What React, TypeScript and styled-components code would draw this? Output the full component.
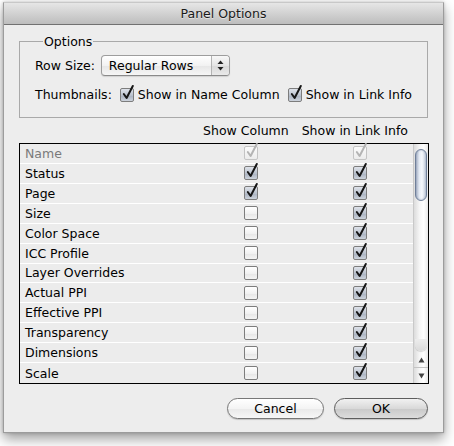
import React from 'react'
import styled, { createGlobalStyle } from 'styled-components'

const GlobalStyle = createGlobalStyle`
	html, body {
		margin: 0;
		padding: 0;
		background: #ffffff;
	}
	body {
		font-family: 'DejaVu Sans', 'Liberation Sans', sans-serif;
		font-size: 12.5px;
		color: #000;
	}
`

type Field = {
	label: string
	column: boolean
	linkInfo: boolean
	disabled?: boolean
}

const fields: Field[] = [
	{ label: 'Name', column: true, linkInfo: true, disabled: true },
	{ label: 'Status', column: true, linkInfo: true },
	{ label: 'Page', column: true, linkInfo: true },
	{ label: 'Size', column: false, linkInfo: true },
	{ label: 'Color Space', column: false, linkInfo: true },
	{ label: 'ICC Profile', column: false, linkInfo: true },
	{ label: 'Layer Overrides', column: false, linkInfo: true },
	{ label: 'Actual PPI', column: false, linkInfo: true },
	{ label: 'Effective PPI', column: false, linkInfo: true },
	{ label: 'Transparency', column: false, linkInfo: true },
	{ label: 'Dimensions', column: false, linkInfo: true },
	{ label: 'Scale', column: false, linkInfo: true },
]

const Page = styled.div`
	padding: 2px 0 0 3px;
	width: 454px;
	height: 446px;
	box-sizing: border-box;
`

const Window = styled.div`
	width: 441px;
	height: 431px;
	box-sizing: border-box;
	border: 1px solid #9c9c9c;
	border-top-color: #c8c8c8;
	background: #ededed;
	box-shadow: 0 6px 12px rgba(0, 0, 0, 0.38), 0 0 3px rgba(0, 0, 0, 0.2);
	display: flex;
	flex-direction: column;
`

const TitleBar = styled.div`
	height: 21px;
	flex-shrink: 0;
	background: linear-gradient(#e6e6e6, #bdbdbd);
	border-bottom: 1px solid #717171;
	display: flex;
	align-items: center;
	justify-content: center;
	color: #1a1a1a;
	text-shadow: 0 1px 0 rgba(255, 255, 255, 0.5);
`

const Body = styled.div`
	padding: 9px 14px 0 15px;
	display: flex;
	flex-direction: column;
`

const GroupBox = styled.fieldset`
	margin: 0 2px 0 0;
	padding: 6px 15px 15px 15px;
	border: 1px solid #a9a9a9;
	display: flex;
	flex-direction: column;
	gap: 11px;
`

const Legend = styled.legend`
	padding: 0 1px;
	margin-left: 8px;
	line-height: 15px;
`

const OptionRow = styled.div`
	display: flex;
	align-items: center;
	gap: 6px;
	white-space: nowrap;
`

const Popup = styled.div`
	width: 129px;
	height: 21px;
	box-sizing: border-box;
	border: 1px solid #9d9d9d;
	border-bottom-color: #8a8a8a;
	border-radius: 4px;
	background: linear-gradient(#ffffff, #f2f2f2 50%, #e6e6e6 51%, #f6f6f6);
	box-shadow: 0 1px 1px rgba(0, 0, 0, 0.12);
	display: flex;
	align-items: stretch;
`

const PopupLabel = styled.span`
	flex: 1;
	padding-left: 7px;
	display: flex;
	align-items: center;
`

const PopupArrows = styled.span`
	width: 17px;
	border-left: 1px solid #b3b3b3;
	display: flex;
	align-items: center;
	justify-content: center;
	border-radius: 0 3px 3px 0;
	background: linear-gradient(#f8f8f8, #e4e4e4 50%, #d8d8d8 51%, #eaeaea);
`

const ThumbRow = styled.div`
	display: flex;
	align-items: center;
	white-space: nowrap;
`

const InlineCheck = styled.label`
	display: flex;
	align-items: center;
	gap: 4px;
	margin-left: 8px;
`

const ColumnHeads = styled.div`
	display: flex;
	justify-content: flex-end;
	gap: 13px;
	padding: 5px 21px 5px 0;
	line-height: 15px;
	white-space: nowrap;
`

const Table = styled.div`
	height: 241px;
	box-sizing: border-box;
	border: 1px solid #000;
	display: flex;
	background: #ececec;
`

const Rows = styled.div`
	flex: 1;
	display: flex;
	flex-direction: column;
`

const Row = styled.div<{ $disabled?: boolean }>`
	height: 20px;
	box-sizing: border-box;
	border-bottom: 1px solid #ffffff;
	display: grid;
	grid-template-columns: 224px 15px 94px 15px 1fr;
	align-items: center;
	color: ${({ $disabled }) => ($disabled ? '#7a7a7a' : '#000')};

	&:last-child {
		border-bottom: none;
	}
`

const RowLabel = styled.span`
	padding-left: 5px;
	white-space: nowrap;
`

const Scrollbar = styled.div`
	width: 15px;
	display: flex;
	flex-direction: column;
	background: linear-gradient(90deg, #dcdcdc, #f6f6f6 40%, #ffffff 70%, #e8e8e8);
	border-left: 1px solid #c9c9c9;
	box-sizing: border-box;
`

const Track = styled.div`
	flex: 1;
	padding: 5px 1px 0 1px;
	display: flex;
	flex-direction: column;
`

const Thumb = styled.div`
	height: 52px;
	border-radius: 7px;
	border: 1px solid #6f7f99;
	box-sizing: border-box;
	background: linear-gradient(90deg, #aab6c9, #e6ecf5 35%, #f4f7fb 60%, #c3cddc);
	box-shadow: inset 0 0 2px rgba(60, 80, 120, 0.4);
`

const TrackEnd = styled.div`
	margin-top: auto;
	height: 12px;
	border-radius: 0 0 7px 7px;
	background: linear-gradient(#ededed, #dadada);
	box-shadow: 0 1px 1px rgba(0, 0, 0, 0.15);
`

const ArrowButton = styled.div<{ $top?: boolean }>`
	height: 15px;
	display: flex;
	align-items: center;
	justify-content: center;
	border-top: 1px solid ${({ $top }) => ($top ? 'transparent' : '#c4c4c4')};
`

const Buttons = styled.div`
	display: flex;
	justify-content: flex-end;
	gap: 10px;
	padding: 14px 1px 0 0;
`

const PushButton = styled.button<{ $default?: boolean }>`
	width: ${({ $default }) => ($default ? '94px' : '97px')};
	height: 21px;
	border-radius: 11px;
	border: 1px solid ${({ $default }) => ($default ? '#5d5d5d' : '#777777')};
	background: ${({ $default }) =>
		$default
			? 'linear-gradient(#f1f1f1, #d9d9d9 50%, #c9c9c9 51%, #dcdcdc)'
			: 'linear-gradient(#ffffff, #f4f4f4 50%, #e9e9e9 51%, #f7f7f7)'};
	box-shadow: 0 1px 1px rgba(0, 0, 0, 0.18);
	font-family: 'DejaVu Sans', 'Liberation Sans', sans-serif;
	font-size: 12.5px;
	color: #000;
	padding: 0;
	cursor: default;
`

const BoxShell = styled.span<{ $checked: boolean; $disabled?: boolean }>`
	position: relative;
	display: inline-block;
	width: 14px;
	height: 14px;
	box-sizing: border-box;
	border: 1px solid ${({ $disabled }) => ($disabled ? '#c4c4c4' : '#7d7d7d')};
	border-radius: 2px;
	background: ${({ $checked, $disabled }) =>
		$disabled
			? 'linear-gradient(#fbfbfb, #ececec)'
			: $checked
				? 'linear-gradient(#dfe3ea, #b8c0cc 55%, #aab3c1 56%, #cdd3dc)'
				: 'linear-gradient(#ffffff, #f1f1f1 55%, #e6e6e6 56%, #f4f4f4)'};
	flex-shrink: 0;
`

const CheckGlyph = styled.svg`
	position: absolute;
	left: 1px;
	top: -4px;
	overflow: visible;
`

const CheckBox: React.FC<{ checked: boolean; disabled?: boolean }> = ({ checked, disabled }) => (
	<BoxShell $checked={checked} $disabled={disabled}>
		{checked && (
			<CheckGlyph width='12' height='15' viewBox='0 0 12 15'>
				<path
					d='M1.8 9 L4.6 13 L10.8 1'
					fill='none'
					stroke={disabled ? '#b4b4b4' : '#161616'}
					strokeWidth='2'
					strokeLinecap='round'
					strokeLinejoin='round'
				/>
			</CheckGlyph>
		)}
	</BoxShell>
)

export default function App() {
	return (
		<Page>
			<GlobalStyle />
			<Window>
				<TitleBar>Panel Options</TitleBar>
				<Body>
					<GroupBox>
						<Legend>Options</Legend>
						<OptionRow>
							<span>Row Size:</span>
							<Popup>
								<PopupLabel>Regular Rows</PopupLabel>
								<PopupArrows>
									<svg width='7' height='11' viewBox='0 0 7 11'>
										<path d='M3.5 0.5 L6.5 4 L0.5 4 Z' fill='#222' />
										<path d='M3.5 10.5 L6.5 7 L0.5 7 Z' fill='#222' />
									</svg>
								</PopupArrows>
							</Popup>
						</OptionRow>
						<ThumbRow>
							<span>Thumbnails:</span>
							<InlineCheck>
								<CheckBox checked />
								<span>Show in Name Column</span>
							</InlineCheck>
							<InlineCheck>
								<CheckBox checked />
								<span>Show in Link Info</span>
							</InlineCheck>
						</ThumbRow>
					</GroupBox>

					<ColumnHeads>
						<span>Show Column</span>
						<span>Show in Link Info</span>
					</ColumnHeads>

					<Table>
						<Rows>
							{fields.map((f) => (
								<Row key={f.label} $disabled={f.disabled}>
									<RowLabel>{f.label}</RowLabel>
									<CheckBox checked={f.column} disabled={f.disabled} />
									<span />
									<CheckBox checked={f.linkInfo} disabled={f.disabled} />
									<span />
								</Row>
							))}
						</Rows>
						<Scrollbar>
							<Track>
								<Thumb />
								<TrackEnd />
							</Track>
							<ArrowButton $top>
								<svg width='7' height='6' viewBox='0 0 7 6'>
									<path d='M3.5 0.5 L6.5 5.5 L0.5 5.5 Z' fill='#444' />
								</svg>
							</ArrowButton>
							<ArrowButton>
								<svg width='7' height='6' viewBox='0 0 7 6'>
									<path d='M3.5 5.5 L6.5 0.5 L0.5 0.5 Z' fill='#444' />
								</svg>
							</ArrowButton>
						</Scrollbar>
					</Table>

					<Buttons>
						<PushButton>Cancel</PushButton>
						<PushButton $default>OK</PushButton>
					</Buttons>
				</Body>
			</Window>
		</Page>
	)
}
